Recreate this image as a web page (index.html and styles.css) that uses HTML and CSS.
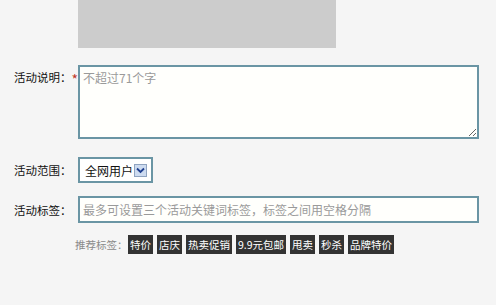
FILE: index.html
```html
<!DOCTYPE html>
<html lang="zh-CN">
<head>
<meta charset="utf-8">
<title>活动设置</title>
<link rel="stylesheet" href="styles.css">
</head>
<body>
<div class="page">
  <div class="preview"></div>

  <div class="row row-desc">
    <label class="lbl">活动说明：<span class="req">*</span></label>
    <textarea class="area" placeholder="不超过71个字"></textarea>
  </div>

  <div class="row row-scope">
    <label class="lbl">活动范围：</label>
    <div class="select">
      <span class="select-text">全网用户</span>
      <span class="arrow">
        <svg width="9" height="7" viewBox="0 0 9 7"><path d="M1 1.5 L4.5 5 L8 1.5" fill="none" stroke="#1f3f8f" stroke-width="1.8"/></svg>
      </span>
    </div>
  </div>

  <div class="row row-tags">
    <label class="lbl">活动标签：</label>
    <input class="field" type="text" placeholder="最多可设置三个活动关键词标签，标签之间用空格分隔">
  </div>

  <div class="row row-rec">
    <span class="rec-label">推荐标签：</span>
    <div class="tags">
      <span class="tag">特价</span>
      <span class="tag">店庆</span>
      <span class="tag">热卖促销</span>
      <span class="tag">9.9元包邮</span>
      <span class="tag">甩卖</span>
      <span class="tag">秒杀</span>
      <span class="tag">品牌特价</span>
    </div>
  </div>
</div>
</body>
</html>
```

FILE: styles.css
```css
html, body {
  margin: 0;
  padding: 0;
  background: #f5f5f5;
}

body {
  font-family: "Noto Sans CJK SC", "Noto Sans", "Liberation Sans", sans-serif;
  font-size: 12px;
  color: #222;
}

.page {
  width: 496px;
  height: 305px;
  overflow: hidden;
}

.preview {
  margin-left: 78px;
  width: 258px;
  height: 48px;
  background: #cccccc;
}

.row {
  display: flex;
  align-items: center;
}

.lbl {
  box-sizing: border-box;
  width: 78px;
  padding-left: 14px;
  font-size: 11.5px;
  line-height: 16px;
  color: #111;
  white-space: nowrap;
}

.req {
  color: #c0392b;
  font-size: 14px;
  margin-left: 0;
  position: relative;
  top: 3px;
}

.row-desc {
  margin-top: 17px;
  align-items: flex-start;
}

.row-desc .lbl {
  padding-top: 3px;
}

.area {
  box-sizing: border-box;
  width: 401px;
  height: 74px;
  margin: 0;
  border: 2px solid #6a95a4;
  background: #fffffc;
  padding: 3px 3px;
  font-family: inherit;
  font-size: 12px;
  line-height: 16px;
  color: #333;
  outline: none;
}

.area::placeholder,
.field::placeholder {
  color: #9a9a9a;
}

.row-scope {
  margin-top: 18px;
}

.select {
  box-sizing: border-box;
  width: 75px;
  height: 26px;
  border: 2px solid #6a95a4;
  background: #fff;
  display: flex;
  align-items: center;
  padding-left: 5px;
}

.select-text {
  font-size: 12px;
  color: #111;
  width: 49px;
  white-space: nowrap;
}

.arrow {
  box-sizing: border-box;
  width: 13px;
  height: 13px;
  border: 1px solid #8fa3c0;
  background: #cddbf0;
  display: flex;
  align-items: center;
  justify-content: center;
}

.row-tags {
  margin-top: 13px;
}

.field {
  box-sizing: border-box;
  width: 401px;
  height: 27px;
  margin: 0;
  border: 2px solid #6a95a4;
  background: #fffffc;
  padding: 0 3px;
  font-family: inherit;
  font-size: 12px;
  color: #333;
  outline: none;
}

.row-rec {
  margin-top: 12px;
  padding-left: 75px;
}

.rec-label {
  width: 53px;
  font-size: 10.5px;
  color: #8a8a8a;
  white-space: nowrap;
}

.tags {
  display: flex;
  gap: 4px;
}

.tag {
  height: 19px;
  line-height: 19px;
  padding: 0 2px;
  background: #333333;
  color: #fff;
  font-size: 10.5px;
  white-space: nowrap;
}
```
